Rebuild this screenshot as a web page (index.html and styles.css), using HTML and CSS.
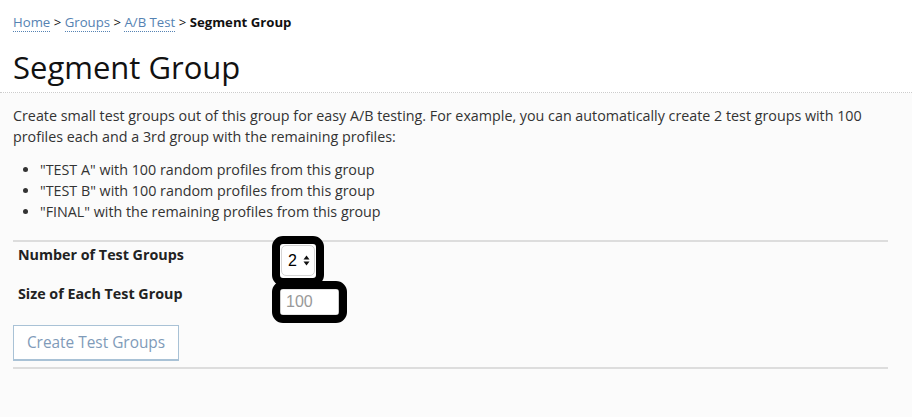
FILE: index.html
```html
<!DOCTYPE html>
<html>
	<head>
		<meta charset="utf-8">
		<title>Segment Group</title>
		<link rel="stylesheet" href="styles.css">
	</head>
	<body>
		<div class="header">
			<div class="crumbs">
				<a href="#">Home</a> &gt; <a href="#">Groups</a> &gt; <a href="#">A/B Test</a> &gt; <b>Segment Group</b>
			</div>
			<h1>Segment Group</h1>
		</div>
		<div class="main">
			<p class="intro">Create small test groups out of this group for easy A/B testing. For example, you can automatically create 2 test groups with 100 profiles each and a 3rd group with the remaining profiles:</p>
			<ul class="steps">
				<li>"TEST A" with 100 random profiles from this group</li>
				<li>"TEST B" with 100 random profiles from this group</li>
				<li>"FINAL" with the remaining profiles from this group</li>
			</ul>
			<form class="segment">
				<div class="row first">
					<label>Number of Test Groups</label>
					<span class="mark pick">
						<select>
							<option>2</option>
							<option>3</option>
							<option>4</option>
						</select>
						<!-- up / down arrows -->
						<svg class="arrows" width="7" height="11" viewBox="0 0 7 11">
							<path d="M3.5 0.5 L6.5 4.5 L0.5 4.5 Z" fill="#111"/>
							<path d="M3.5 10.5 L6.5 6.5 L0.5 6.5 Z" fill="#111"/>
						</svg>
					</span>
				</div>
				<div class="row">
					<label>Size of Each Test Group</label>
					<span class="mark size">
						<input type="text" placeholder="100">
					</span>
				</div>
				<button type="button" class="btn">Create Test Groups</button>
			</form>
		</div>
	</body>
</html>
```

FILE: styles.css
```css
body{
	margin: 0;
	background-color: #fbfbfb;
	font-family: "Open Sans", "Liberation Sans", sans-serif;
	color: #333;
}
.header{
	background-color: #fff;
	padding: 12px 13px 5px;
	border-bottom: 1px dotted #ccc;
}
.crumbs{  /* 面包屑 */
	font-size: 13.2px;
	line-height: 20px;
	color: #111;
}
.crumbs a{
	color: #5582b2;
	text-decoration: none;
	border-bottom: 1px dotted #5582b2;
}
.crumbs b{
	font-weight: 700;
}
h1{
	margin: 15px 0 0 0;
	font-size: 31px;
	font-weight: 400;
	line-height: 40px;
	color: #111;
}
.main{
	width: 875px;
	padding: 12px 0 0 13px;
	font-size: 14.3px;
	line-height: 21px;
}
.intro{
	margin: 0;
}
.steps{
	margin: 12px 0 0 0;
	padding-left: 27px;
}
.segment{
	margin-top: 18px;
	border-top: 2px solid #ddd;
	border-bottom: 2px solid #ddd;
	padding-bottom: 6px;
}
.row{
	display: flex;
	align-items: flex-start;
	padding-top: 5px;
}
.row.first{
	padding-top: 2px;
}
.row label{
	width: 262px;
	padding-left: 5px;
	font-weight: 700;
	color: #222;
}
.mark{  /* 黑色粗框 标注 */
	position: relative;
	display: inline-block;
	background-color: #fff;
	outline: 8px solid #000;
	border-radius: 3px;
}
.pick{
	width: 36px;
	height: 34px;
	padding: 1px 0 0 1px;
	box-sizing: border-box;
}
.pick select{
	appearance: none;
	-webkit-appearance: none;
	width: 34px;
	height: 31px;
	margin: 0;
	padding: 0 0 0 6px;
	border: 1px solid #d4d4d4;
	border-radius: 5px;
	background-color: #fff;
	font-family: "Liberation Sans", sans-serif;
	font-size: 16px;
	color: #000;
}
.arrows{
	position: absolute;
	left: 23px;
	top: 11px;
	pointer-events: none;
}
.size{
	margin-top: 6px;
	width: 59px;
	height: 26px;
}
.size input{
	width: 59px;
	height: 26px;
	box-sizing: border-box;
	margin: 0;
	padding: 0 0 0 5px;
	border: 1px solid #e2e2e2;
	border-left-color: #ccc;
	border-right-color: #ccc;
	font-family: "Liberation Sans", sans-serif;
	font-size: 16px;
	outline: none;
}
.size input::placeholder{
	color: #999;
}
.btn{
	display: block;
	margin-top: 10px;
	width: 166px;
	height: 36px;
	padding: 0;
	background-color: #fff;
	border: 1px solid #a9c2d6;
	border-bottom-width: 2px;
	font-family: "Open Sans", "Liberation Sans", sans-serif;
	font-size: 15.4px;
	color: #7f9bb9;
	cursor: pointer;
}
```
